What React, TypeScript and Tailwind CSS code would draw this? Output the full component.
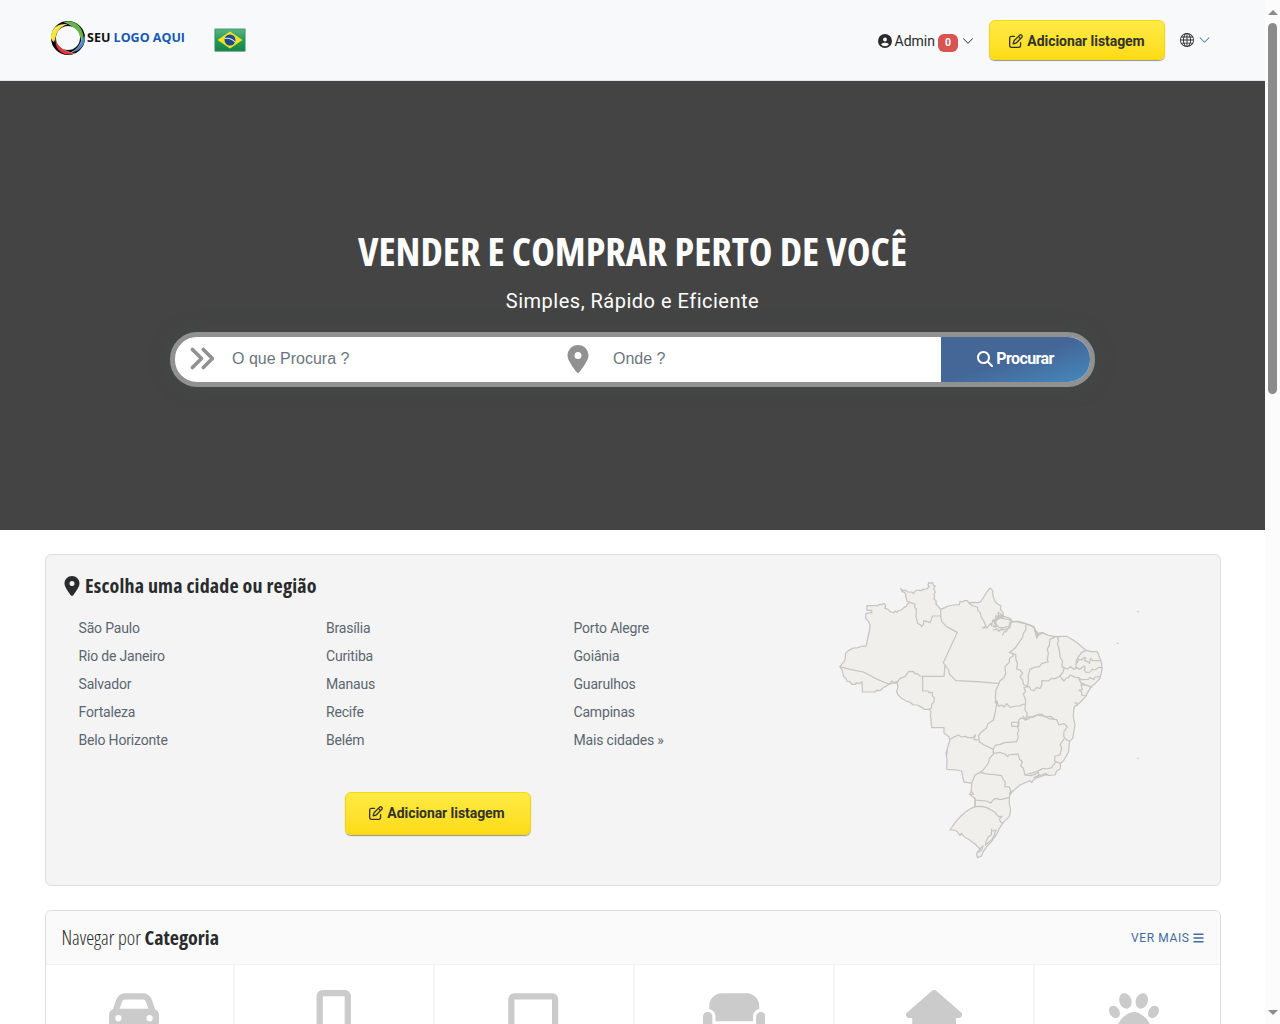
import React from 'react';
import { BsChevronDown, BsGlobe } from 'react-icons/bs';
import {
  FaAnglesRight,
  FaBars,
  FaCar,
  FaCircleUser,
  FaCouch,
  FaLaptop,
  FaLocationDot,
  FaMagnifyingGlass,
  FaMobileScreenButton,
  FaPaw,
  FaRegPenToSquare,
} from 'react-icons/fa6';

const cities = [
  ['São Paulo', 'Rio de Janeiro', 'Salvador', 'Fortaleza', 'Belo Horizonte'],
  ['Brasília', 'Curitiba', 'Manaus', 'Recife', 'Belém'],
  ['Porto Alegre', 'Goiânia', 'Guarulhos', 'Campinas', 'Mais cidades »'],
];

const SolidHouse = ({ className }: { className: string }) => (
  <svg viewBox="0 0 576 512" fill="currentColor" className={className}>
    <path d="M309 8c-12-11-30-11-42 0L11 231c-10 8-14 21-9 35 5 13 16 21 30 21h32v177c0 26 22 48 48 48h352c26 0 48-22 48-48V287h32c14 0 25-8 30-21 5-14 1-27-9-35L309 8z" />
  </svg>
);

const categories = [
  { Icon: FaCar, size: 'w-[50px]' },
  { Icon: FaMobileScreenButton, size: 'w-[37.5px]' },
  { Icon: FaLaptop, size: 'w-[62.5px]' },
  { Icon: FaCouch, size: 'w-[62.5px]' },
  { Icon: SolidHouse, size: 'w-[56.25px]' },
  { Icon: FaPaw, size: 'w-[50px]' },
];

const Logo = () => (
  <a className="flex items-center" href="#">
    <svg viewBox="0 0 36 36" className="h-9 w-9" fill="none">
      <circle cx="18" cy="18" r="14.500" stroke="#0b0b0b" strokeWidth="5" />
      <path d="M.8 16C2 8 8 3.500 17 4.500C11 6.500 6.500 11 5.500 18L4 22C2 21 .8 19 .8 16Z" fill="#f3e53a" />
      <path d="M14 2C24-1 33 6 33.500 18L31.500 20C30 12 24 5.500 14 2Z" fill="#63b345" />
      <path d="M35 16C36 24 31 31 21 32.500C27 29.500 30.500 25 31.500 19Z" fill="#4c86c6" />
      <path d="M5.500 20C8 27 14 31.500 25 33.500C16 37 5 32 5.500 20Z" fill="#e8333a" />
      <path d="M3.500 12C6 6.500 11 4 17 4.500M14 2C24 5.500 30 12 31.500 20M32 19C30.500 25 27 29.500 21 32.500M5.500 19C8 27 14 31.500 25 33.500" stroke="#f8f9fb" strokeWidth=".4" />
    </svg>
    <span className="ml-px font-['Open_Sans'] text-[12.500px] font-bold whitespace-nowrap text-[#111]">
      SEU <span className="text-[#1558b7]">LOGO AQUI</span>
    </span>
  </a>
);

const Flag = () => (
  <svg viewBox="0 0 32 24" className="h-6 w-8">
    <defs>
      <linearGradient id="flag" x1="0" y1="0" x2="0" y2="1">
        <stop offset="0" stopColor="#5cb487" />
        <stop offset=".5" stopColor="#279a5b" />
        <stop offset="1" stopColor="#118447" />
      </linearGradient>
    </defs>
    <rect x=".5" y="1" width="31" height="23" rx="1" fill="#9aa39f" opacity=".6" />
    <rect x="1" y="1" width="30" height="22" fill="url(#flag)" stroke="#2f8f5b" strokeWidth=".8" />
    <path d="M16 3.500L28.500 12L16 20.500L3.500 12Z" fill="#f6e01c" />
    <circle cx="16" cy="12" r="5.500" fill="#1d4a93" />
    <path d="M10.800 10.500C14.500 9.800 18.500 11.200 21 14" stroke="#dfe9f5" strokeWidth="1.100" fill="none" />
  </svg>
);

const BrazilMap = () => (
  <svg viewBox="0 0 960 885" className="h-[295px] w-[320px]" fill="none" stroke="#c6c5c1" strokeWidth="3.700" strokeLinejoin="round" strokeLinecap="round">
    <path
      fill="#f0efeb"
      d="M111 107L143 107L148 103L155 104L162 100L167 106L165 115L174 118L182 126L192 128L196 123L201 127L205 122L214 120L222 112L229 109L232 102L240 97L230 93L229 82L226 79L228 73L222 66L217 66L212 56L220 62L228 60L232 66L245 66L250 71L255 64L262 60L272 62L280 58L289 57L298 50L294 45L296 38L302 40L308 37L310 46L316 48L311 56L316 66L312 74L314 80L312 87L318 92L318 102L332 118L345 113L355 108L370 105L388 104L390 94L399 96L402 92L412 92L416 98L430 97L445 98L452 95L462 80L470 66L480 54L488 62L489 77L495 95L504 103L513 108L511 118L519 128L520 138L541 146L548 155L565 154L585 160L600 165L613 174L617 190L622 200L628 190L642 190L655 196L675 200L710 199L740 217L768 241L785 245L802 245L810 265L815 280L816 298L810 325L796 340L782 352L766 380L752 396L740 405L732 412L730 440L735 465L728 505L718 515L716 545L702 570L692 580L690 597L680 603L675 615L655 616L650 612L640 617L620 624L610 630L605 638L600 632L570 645L545 667L538 680L538 700L542 720L538 740L520 757L508 775L502 790L484 815L470 830L458 848L455 858L442 863L440 850L450 837L438 825L428 817L415 808L402 800L394 790L390 797L380 783L370 780L360 780L370 765L380 752L393 738L405 727L420 717L435 710L435 685L425 678L420 670L424 665L425 640L410 637L402 637L398 620L395 603L380 600L350 598L351 570L348 550L355 525L360 510L357 500L342 490L342 473L305 473L303 450L301 435L303 425L298 418L282 418L275 412L262 405L250 405L240 397L228 393L215 385L204 375L200 365L204 351L201 338L194 340L185 333L178 343L160 353L150 362L140 361L135 366L97 366L96 335L88 341L78 338L78 343L65 343L60 335L51 334L48 326L40 318L37 301L30 290L45 270L47 250L55 242L70 234L80 234L98 228L108 229L113 206L115 195L119 180L120 165L115 154L107 145L108 130L125 128L125 121L111 121Z"
    />
    <path d="M240 97L255 103L254 112L259 117L258 140L263 160L272 165L275 170L280 164L282 152L292 155L300 158L308 138L332 138L332 118" />
    <path d="M332 138L335 155L350 170L382 187L340 278L345 285L342 319L278 319L270 318L260 310L255 312L250 304L235 305L225 320L210 325L201 338M30 290L60 298L100 306L140 327L178 343L200 335" />
    <path d="M278 319L278 363L294 363L297 368L308 367L307 377L313 384L312 397L306 401L304 414L298 418M345 285L356 300L358 312L378 332L440 335L505 340" />
    <path d="M416 98L428 108L442 111L444 122L450 128L454 142L460 150L468 170L456 174L470 174L482 160L485 168L488 150L494 157L498 136L504 143L505 127L518 136L505 137" />
    <g transform="translate(450 0)">
      <path d="M48 152L60 144L92 150L86 170L72 172L58 173L45 160L41 150L60 142L73 145M40 180L51 177L57 184L65 176L75 180L84 176L78 186L72 185L68 195M42 165L52 180L62 180L83 177L91 170L93 158L105 154L135 161L162 170L167 188L170 205L178 190L190 187M165 176L172 196L184 190" />
      <path d="M38 155L50 146L62 136M44 160L54 142L70 140M40 170L50 168L46 156M166 182L174 190L170 198L180 190" strokeWidth="5" />
      <path d="M137 165L138 178L130 190L128 202L115 220L105 235L88 248L97 250L100 258L89 264L88 277L75 290L77 312L70 325L60 332L55 345L48 360L46 385L50 402" />
      <path d="M97 250L107 254L108 270L112 280L110 297L120 300L128 310L120 320L128 330L130 343L142 350" />
      <path d="M50 402L45 396L51 393L55 409L65 405L72 411L80 401L90 412L110 408L120 408L126 404L135 402M142 350L132 353L137 365L130 372L137 390L135 420L142 430L138 445M50 402L45 430L40 450" />
      <path d="M227 200L210 208L208 226L202 237L205 250L202 270L205 275L185 281L178 290L163 292L150 298L145 315L145 335L142 350M232 203L236 212L232 220L238 240L240 260L248 275L245 288L252 293L250 305L240 318L225 326L215 325L205 333L185 332L186 344L180 355L169 353L162 362L153 360L148 350L142 350M232 203L240 199" />
      <path d="M250 292L262 297L272 290L281 298L288 295L289 272L296 260L305 247L318 241M290 280L297 268L305 270L312 262L318 264L313 272L323 275L328 280L332 265L338 272L362 272" />
      <path d="M288 292L300 298L312 288L316 292L313 300L318 307L331 306L337 297L345 300L355 293L366 292M240 318L244 324L252 333L258 324L265 324L270 315L286 322L297 323L303 329L325 328L329 323L342 328L345 321L360 320M297 326L302 338L335 352L320 345L303 344L307 358L297 361L305 366L305 375L318 378" />
      <path d="M135 450L145 440L160 442L178 432L187 433L195 441L212 439L222 448" />
      <path d="M284 399L289 398L293 406" />
    </g>
    <g transform="translate(270 435)">
      <path d="M92 72L105 65L115 60L124 66L135 64L145 68L160 68L166 59L162 74L176 75M220 15L203 27L200 38L182 53L176 62L178 80L196 92L220 103" />
      <path d="M220 103L226 91L240 88L255 83L290 80L295 65L292 56L297 45L292 38L297 30L296 15L303 9L312 12L309 4L318 15L325 12L335 6L349 0L363 2L380 5L385 11L410 14L417 30L432 26L442 36L432 50L431 65L440 75L448 78" />
      <path d="M275 22H295V34H275ZM432 72L420 90L425 98L420 120L405 123L404 138L422 145M408 142L398 152L395 158L380 162L370 160L350 170L315 180M220 115L240 112L255 117L263 125L266 120L280 118L295 117L298 132L307 140L302 153L310 160L315 180L330 182L345 178M220 103L220 118L209 129L205 144L190 165L180 172L165 180L155 205" />
      <path d="M180 172L205 178L220 178L245 182L249 193L255 200L255 215L268 216L272 227L268 237L278 228M165 255L185 257L200 258L212 264L220 254L228 250L240 254L268 248M165 250L165 275L185 274L200 278L210 283L225 292L235 305L246 304L238 313L243 322L248 325" />
      <path d="M215 342L214 360L205 365L198 380L196 390L215 375L222 362L228 345L218 348M180 402L189 392L185 406L174 412M345 178L355 172L357 180L342 188L352 184L378 175L380 182M153 228L160 238L148 239M82 105L80 120" />
    </g>
    <path d="M923 125h2M862 220h2M924 565h1" strokeWidth="4" />
  </svg>
);

const AddListingButton = ({ className }: { className: string }) => (
  <button
    className={`flex items-center justify-center gap-1 rounded-md border border-[#f5d90f] bg-linear-to-b from-[#ffeb43] to-[#fcdb12] text-sm font-bold tracking-[-0.06px] text-[#33332c] shadow-[0_1px_1px_rgba(0,0,0,0.4)] ${className}`}
  >
    <FaRegPenToSquare className="h-3.5 w-3.5" />
    <span className="whitespace-nowrap">Adicionar listagem</span>
  </button>
);

const Header = () => (
  <header className="flex h-[81px] items-start border-b border-[#dee2e6] bg-[#f8f9fb] pr-[55px] pl-[50px]">
    <div className="flex pt-5">
      <Logo />
      <div className="pt-2 pl-[29px]">
        <Flag />
      </div>
    </div>
    <nav className="ml-auto flex pt-5">
      <div className="mr-[15px] flex h-[41px] items-center text-sm text-[#292b2c]">
        <FaCircleUser className="mr-[3px] h-3.5 w-3.5" />
        <span>Admin</span>
        <span className="mt-1 ml-[3px] flex h-[18px] w-5 items-center justify-center rounded-md bg-[#d9534f] text-[10.500px] font-bold text-white">0</span>
        <BsChevronDown className="ml-1 h-3 w-3" />
      </div>
      <AddListingButton className="h-10 w-44 pt-px" />
      <div className="-mr-px ml-[15px] flex h-10 items-center gap-1 text-[#292b2c]">
        <BsGlobe className="h-3.5 w-3.5" />
        <BsChevronDown className="h-3 w-[13px] text-[#33658f]" />
      </div>
    </nav>
  </header>
);

const Hero = () => (
  <section className="flex h-[449px] flex-col items-center bg-[#444] pt-[140px] text-white">
    <h1 className="font-['Open_Sans'] text-[40px] leading-[60px] font-bold whitespace-nowrap uppercase font-stretch-condensed">
      Vender e comprar perto de você
    </h1>
    <p className="mt-[5px] text-xl leading-[30px] tracking-[0.5px]">Simples, Rápido e Eficiente</p>
    <form className="mt-4 flex h-[55px] w-[925px] overflow-hidden rounded-[27px] border-[5px] border-[#919191] bg-white font-['Liberation_Sans',Arial,sans-serif] text-base text-[#6c757d] shadow-[0_0_20px_rgba(70,80,75,0.4)]">
      <label className="flex w-[376px] items-center pl-3">
        <FaAnglesRight className="mb-0.5 h-[29px] w-[29px] text-[#919191]" />
        <span className="ml-4 pb-0.5">O que Procura ?</span>
      </label>
      <label className="flex flex-1 items-center pl-4">
        <FaLocationDot className="mb-0.5 h-7 w-[22px] text-[#919191]" />
        <span className="ml-6 pb-0.5">Onde ?</span>
      </label>
      <button type="button" className="flex w-[149px] items-center justify-center gap-[3px] bg-linear-to-br from-[#446798] from-50% to-[#4489bd] pb-0.5 font-[Roboto] text-base font-bold tracking-[-0.6px] text-white">
        <FaMagnifyingGlass className="h-4 w-4" />
        <span>Procurar</span>
      </button>
    </form>
  </section>
);

const Locations = () => (
  <section className="mt-6 flex h-[332px] rounded-md border border-[#dfdfdf] bg-[#f4f4f4]">
    <div className="w-[783.5px] pt-4 pl-[18px]">
      <h2 className="flex h-[30px] items-center font-['Open_Sans'] text-xl font-bold tracking-[0.18px] text-[#292b2c] font-stretch-condensed">
        <FaLocationDot className="mr-[5px] mb-px h-5 w-4" />
        <span className="whitespace-nowrap">Escolha uma cidade ou região</span>
      </h2>
      <div className="mt-[13px] grid w-[757px] grid-cols-3 pl-[14.500px]">
        {cities.map((column) => (
          <ul key={column[0]} className="text-sm leading-7 tracking-[-0.18px] text-[#5b6670]">
            {column.map((city) => (
              <li key={city}>{city}</li>
            ))}
          </ul>
        ))}
      </div>
      <div className="mt-[38px] flex w-[748px] justify-center">
        <AddListingButton className="h-[43px] w-[186px] pr-0.5 pb-0.5" />
      </div>
    </div>
    <div className="pt-[15px]">
      <BrazilMap />
    </div>
  </section>
);

const Categories = () => (
  <section className="mt-6 h-[200px] overflow-hidden rounded-md border border-[#dcdcdc] bg-white">
    <div className="flex h-[54px] items-center justify-between border-b border-[#f2f2f2] bg-[#fafafa] pr-[16.5px] pl-[15.5px]">
      <h2 className="font-['Open_Sans'] text-xl font-light whitespace-nowrap text-[#292b2c] font-stretch-condensed">
        Navegar por <span className="font-bold">Categoria</span>
      </h2>
      <a href="#" className="flex items-center gap-[3px] text-xs tracking-[0.6px] text-[#426b9d]">
        VER MAIS <FaBars className="h-3 w-[11px]" />
      </a>
    </div>
    <div className="-mr-[15px] -ml-[11.5px] flex h-[150px]">
      {categories.map(({ Icon, size }, i) => (
        <div key={i} className="flex flex-1 justify-center border-r-2 border-[#f5f5f5] pt-[25px] text-[#cbcbcb]">
          <Icon className={`h-[50px] shrink-0 ${size}`} />
        </div>
      ))}
    </div>
  </section>
);

const Scrollbar = () => (
  <div className="flex w-[15px] flex-col items-center bg-[#fcfcfc] pt-[10px] pb-[9px]">
    <div className="h-0 w-0 border-x-[5px] border-b-[5px] border-x-transparent border-b-[#8b8b8b]" />
    <div className="mt-2 h-[371px] w-[9px] rounded-full bg-[#8b8b8b]" />
    <div className="mt-auto h-0 w-0 border-x-[5px] border-t-[5px] border-x-transparent border-t-[#8b8b8b]" />
  </div>
);

export default function App() {
  return (
    <div className="flex h-screen overflow-hidden bg-white font-[Roboto,sans-serif]">
      <div className="w-[1265px] overflow-hidden">
        <Header />
        <Hero />
        <main className="ml-[45px] w-[1176px]">
          <Locations />
          <Categories />
        </main>
      </div>
      <Scrollbar />
    </div>
  );
}
